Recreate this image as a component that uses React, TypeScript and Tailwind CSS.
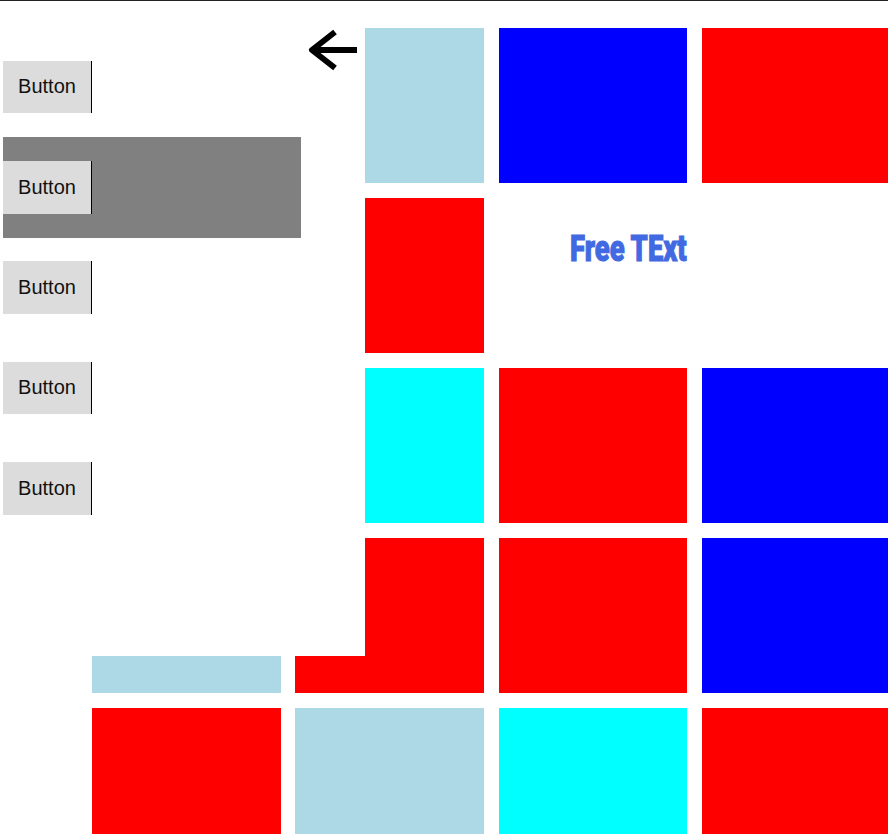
const cells = [
  'bg-[#add8e6]', 'bg-[#add8e6]', 'bg-[#0000ff]', 'bg-[#ff0000]',
  'bg-white', 'bg-[#ff0000]', 'text', 'bg-white',
  'bg-white', 'bg-[#00ffff]', 'bg-[#ff0000]', 'bg-[#0000ff]',
  'bg-[#add8e6]', 'bg-[#ff0000]', 'bg-[#ff0000]', 'bg-[#0000ff]',
  'bg-[#ff0000]', 'bg-[#add8e6]', 'bg-[#00ffff]', 'bg-[#ff0000]',
];

function SideButton() {
  return (
    <button className="h-[52.67px] w-[89px] border-r border-black bg-[#dcdcdc] pb-[1.4px] text-center text-[20px] text-[#111111]">
      Button
    </button>
  );
}

export default function App() {
  return (
    <div className="relative h-[834px] w-[888px] overflow-hidden border-t border-[#222222] bg-white font-['Liberation_Sans',Arial,sans-serif]">
      <div className="ml-[92px] mt-[27px] grid w-[799px] grid-cols-[repeat(4,188.67px)] auto-rows-[155.33px] gap-[14.67px]">
        {cells.map((cell, i) =>
          cell === 'text' ? (
            <div key={i} className="flex items-center justify-end pb-[54px] pr-[1px]">
              <span className="origin-right scale-x-[0.74] whitespace-nowrap font-['Roboto',sans-serif] text-[37px] font-black leading-none text-[#4169e1] [-webkit-text-stroke:1px_#4169e1]">
                Free TExt
              </span>
            </div>
          ) : (
            <div key={i} className={cell} />
          )
        )}
      </div>

      {/* drawer that sits over the first columns */}
      <div className="absolute left-0 top-0 flex h-[655px] w-[365px] bg-white">
        <div className="ml-[3px] w-[298px] pt-[36px]">
          <div className="flex h-[100.33px] items-center"><SideButton /></div>
          <div className="flex h-[100.33px] items-center bg-[#808080]"><SideButton /></div>
          <div className="flex h-[100.33px] items-center"><SideButton /></div>
          <div className="flex h-[100.33px] items-center"><SideButton /></div>
          <div className="flex h-[100.33px] items-center"><SideButton /></div>
        </div>
        <svg className="ml-[7px] mt-[27px] h-[44px] w-[50px]" viewBox="0 0 50 44" fill="none" stroke="black" strokeWidth="6">
          <path d="M49 22H4" />
          <path d="M27 4L4 22L27 40" strokeLinejoin="round" />
        </svg>
      </div>
    </div>
  );
}
